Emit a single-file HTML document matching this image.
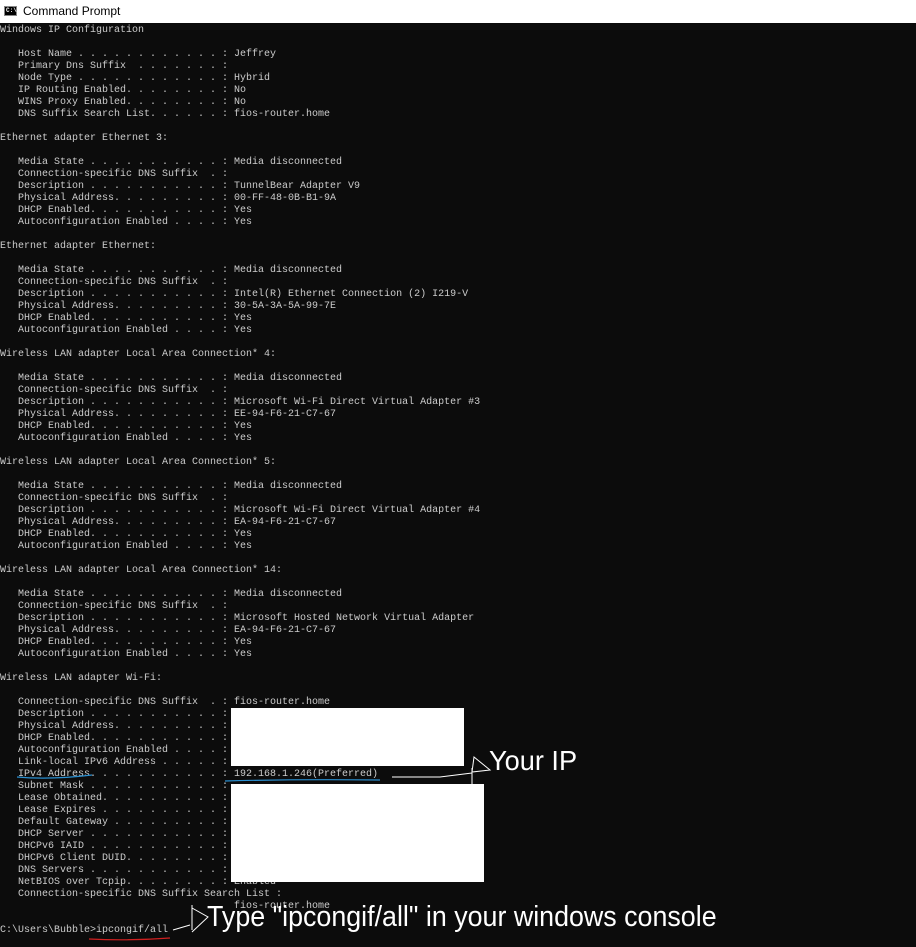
<!DOCTYPE html>
<html><head><meta charset="utf-8"><style>
html,body{margin:0;padding:0;width:916px;height:947px;overflow:hidden;background:#0c0c0c}
#tb{position:absolute;left:0;top:0;width:916px;height:23px;background:#fff}
#tb span{position:absolute;left:23px;top:4px;font:12px "Liberation Sans",sans-serif;color:#000}
#ic{position:absolute;left:4px;top:6px;width:13px;height:10px;background:#000;border:1px solid #888;box-sizing:border-box;color:#fff;font:bold 6px "Liberation Mono",monospace;line-height:8px;text-align:left;padding-left:1px}
pre{position:absolute;left:0;top:25px;margin:0;font:10px/12px "Liberation Mono",monospace;color:#cccccc;letter-spacing:0}
.w{position:absolute;background:#fff}
.big{position:absolute;color:#fff;font-family:"Liberation Sans",Arial,sans-serif;white-space:nowrap;transform-origin:0 0}
</style></head><body>
<div id="tb"><div id="ic">C:\</div><span>Command Prompt</span></div>
<pre>Windows IP Configuration

   Host Name . . . . . . . . . . . . : Jeffrey
   Primary Dns Suffix  . . . . . . . :
   Node Type . . . . . . . . . . . . : Hybrid
   IP Routing Enabled. . . . . . . . : No
   WINS Proxy Enabled. . . . . . . . : No
   DNS Suffix Search List. . . . . . : fios-router.home

Ethernet adapter Ethernet 3:

   Media State . . . . . . . . . . . : Media disconnected
   Connection-specific DNS Suffix  . :
   Description . . . . . . . . . . . : TunnelBear Adapter V9
   Physical Address. . . . . . . . . : 00-FF-48-0B-B1-9A
   DHCP Enabled. . . . . . . . . . . : Yes
   Autoconfiguration Enabled . . . . : Yes

Ethernet adapter Ethernet:

   Media State . . . . . . . . . . . : Media disconnected
   Connection-specific DNS Suffix  . :
   Description . . . . . . . . . . . : Intel(R) Ethernet Connection (2) I219-V
   Physical Address. . . . . . . . . : 30-5A-3A-5A-99-7E
   DHCP Enabled. . . . . . . . . . . : Yes
   Autoconfiguration Enabled . . . . : Yes

Wireless LAN adapter Local Area Connection* 4:

   Media State . . . . . . . . . . . : Media disconnected
   Connection-specific DNS Suffix  . :
   Description . . . . . . . . . . . : Microsoft Wi-Fi Direct Virtual Adapter #3
   Physical Address. . . . . . . . . : EE-94-F6-21-C7-67
   DHCP Enabled. . . . . . . . . . . : Yes
   Autoconfiguration Enabled . . . . : Yes

Wireless LAN adapter Local Area Connection* 5:

   Media State . . . . . . . . . . . : Media disconnected
   Connection-specific DNS Suffix  . :
   Description . . . . . . . . . . . : Microsoft Wi-Fi Direct Virtual Adapter #4
   Physical Address. . . . . . . . . : EA-94-F6-21-C7-67
   DHCP Enabled. . . . . . . . . . . : Yes
   Autoconfiguration Enabled . . . . : Yes

Wireless LAN adapter Local Area Connection* 14:

   Media State . . . . . . . . . . . : Media disconnected
   Connection-specific DNS Suffix  . :
   Description . . . . . . . . . . . : Microsoft Hosted Network Virtual Adapter
   Physical Address. . . . . . . . . : EA-94-F6-21-C7-67
   DHCP Enabled. . . . . . . . . . . : Yes
   Autoconfiguration Enabled . . . . : Yes

Wireless LAN adapter Wi-Fi:

   Connection-specific DNS Suffix  . : fios-router.home
   Description . . . . . . . . . . . :
   Physical Address. . . . . . . . . :
   DHCP Enabled. . . . . . . . . . . :
   Autoconfiguration Enabled . . . . :
   Link-local IPv6 Address . . . . . :
   IPv4 Address. . . . . . . . . . . : 192.168.1.246(Preferred)
   Subnet Mask . . . . . . . . . . . :
   Lease Obtained. . . . . . . . . . :
   Lease Expires . . . . . . . . . . :
   Default Gateway . . . . . . . . . :
   DHCP Server . . . . . . . . . . . :
   DHCPv6 IAID . . . . . . . . . . . :
   DHCPv6 Client DUID. . . . . . . . :
   DNS Servers . . . . . . . . . . . :
   NetBIOS over Tcpip. . . . . . . . : Enabled
   Connection-specific DNS Suffix Search List :
                                       fios-router.home

C:\Users\Bubble>ipcongif/all</pre>
<div class="w" style="left:231px;top:708px;width:233px;height:58px"></div>
<div class="w" style="left:231px;top:784px;width:253px;height:98px"></div>
<svg style="position:absolute;left:0;top:0" width="916" height="947">
<path d="M17 777 Q50 780 92 775" stroke="#2a8fd0" stroke-width="1.2" fill="none"/>
<path d="M225 781 Q300 779 380 780" stroke="#2a8fd0" stroke-width="1.2" fill="none"/>
<path d="M89 939 Q130 941 170 938" stroke="#d02020" stroke-width="1.2" fill="none"/>
<path d="M392 777 L440 777 L472 773" stroke="#fff" stroke-width="1" fill="none"/>
<path d="M474 757 L490 770 L472 772 Z M472 768 L472 784" stroke="#fff" stroke-width="1" fill="none"/>
<path d="M173 930 L190 925" stroke="#fff" stroke-width="1" fill="none"/>
<path d="M192 908 L208 917 L192 932 M192 905 L192 930" stroke="#fff" stroke-width="1" fill="none"/>
</svg>
<div class="big" style="left:489px;top:745px;font-size:28px;transform:scaleX(0.97)">Your IP</div>
<div class="big" style="left:207px;top:901px;font-size:29px;transform:scaleX(0.925)">Type "ipcongif/all" in your windows console</div>
</body></html>
